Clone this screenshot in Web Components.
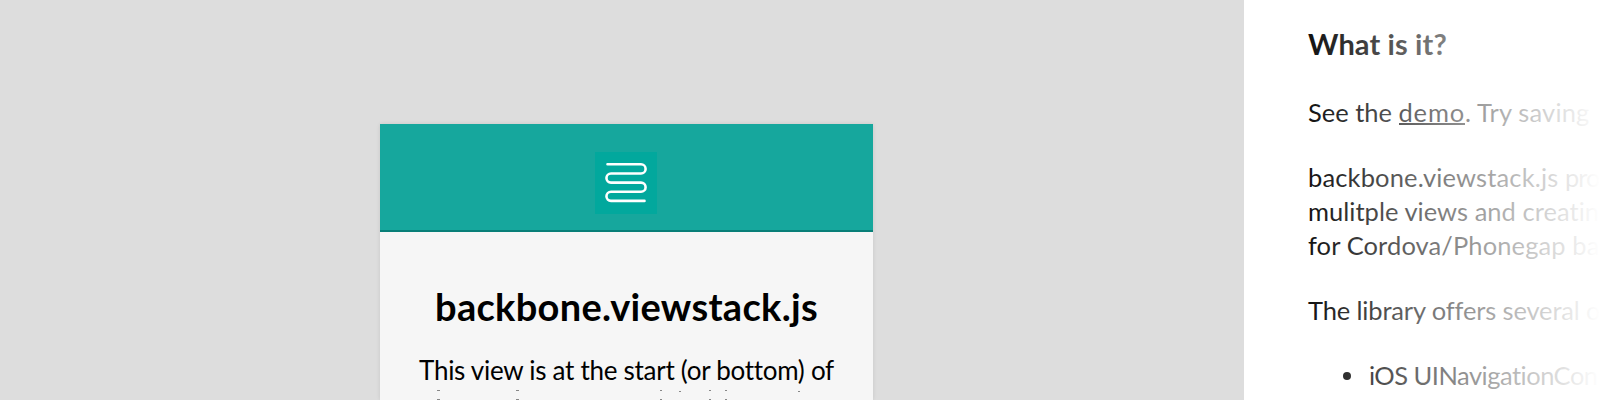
<!DOCTYPE html>
<html lang="en"><head><meta charset="utf-8"><title>backbone.viewstack.js</title>
<style>
html,body{margin:0;height:400px;overflow:hidden;background:#ddd}
body{font-family:Lato,"Open Sans",sans-serif;color:#111}
</style></head><body>
<demo-page>
  <view-card slot="stage">
    <fit-text slot="title" width="383">backbone.viewstack.js</fit-text>
    <fit-text slot="text" width="414">This view is at the start (or bottom) of</fit-text>
  </view-card>
  <doc-panel slot="docs"></doc-panel>
</demo-page>
<script>
const define=(name,html,setup)=>customElements.define(name,class extends HTMLElement{
  connectedCallback(){
    if(this.shadowRoot)return;
    this.attachShadow({mode:'open'}).innerHTML=html;
    if(setup)setup.call(this);
  }
});
define('stack-logo',`<style>:host{display:block;width:62px;height:62px;background:#02a89d}svg{display:block}</style>
<svg width="62" height="62" fill="none" stroke="#fff" stroke-width="2.6" stroke-linecap="round"><path d="M12.5 12.3H46a4.6 4.6 0 0 1 0 9.2H16a4.55 4.55 0 0 0 0 9.1H46a4.6 4.6 0 0 1 0 9.2H16a4.55 4.55 0 0 0 0 9.1H49.5"/></svg>`);
define('view-card',`<style>
:host{display:flex;flex-direction:column;width:493px;height:276px;background:#f6f6f6;box-shadow:0 0 4px rgba(0,0,0,.1)}
header{height:108px;padding:28px 1px 0 0;box-sizing:border-box;display:flex;justify-content:center;align-items:flex-start;background:#16a79d;border-bottom:2px solid #087f78}
.t{display:flex;justify-content:center;font-weight:700;font-size:38px;line-height:46px;margin-top:51px;color:#000}
.p{display:flex;justify-content:center;font-size:26px;line-height:34px;margin-top:24px;color:#000}
svg{display:block;margin-top:3px}
</style><header><stack-logo></stack-logo></header><div class="t"><slot name="title"></slot></div><div class="p"><slot name="text"></slot></div>
<svg width="493" height="10" stroke="#888" stroke-width="1"><path d="M57 .5h3M136 .5h3M280 .5h2M329 .5h2M345 .5h2M299 1.5h2M418 1.5h2M57 9.5h3M136 9.5h3M280 9.5h2M329 9.5h2M345 9.5h2"/></svg>`);
define('doc-panel',`<style>
:host{display:block;position:relative;box-sizing:border-box;width:356px;height:400px;overflow:hidden;background:#fff;padding:26px 0 0 64px;font-size:25.5px;line-height:34px;color:#111}
:host::after{content:"";position:absolute;inset:0;background:linear-gradient(90deg,rgba(255,255,255,0) 64px,#fff 356px)}
h2{margin:0 0 33px;font-size:29px;line-height:36px}
p{margin:0 0 31px}
.row{display:flex}
.row a{border-bottom:2px solid;height:28px;margin-bottom:4px}
.item{display:flex;align-items:center;gap:18px;padding-left:35px}
.item i{width:8px;height:8px;border-radius:50%;background:#111;margin-top:1px}
</style><h2><fit-text width="139">What is it?</fit-text></h2>
<p class="row"><fit-text width="90.5">See the </fit-text><a><fit-text width="66.5">demo</fit-text></a><fit-text width="124.5">. Try saving</fit-text></p>
<p><span class="row"><fit-text width="257">backbone.viewstack.js </fit-text><fit-text width="34.5">pro</fit-text></span><fit-text width="291.5">mulitple views and creatin</fit-text><fit-text width="291.5">for Cordova/Phonegap ba</fit-text></p>
<p><fit-text width="291.5">The library offers several o</fit-text></p>
<div class="item"><i></i><fit-text width="229">iOS UINavigationCon</fit-text></div>`);
define('demo-page',`<style>:host{display:flex;width:1600px;height:400px;overflow:hidden;background:#ddd}
main{width:1244px;box-sizing:border-box;padding:124px 0 0 380px}</style><main><slot name="stage"></slot></main><slot name="docs"></slot>`);
/* Tracks a line of text so that it fills the given measure; registered last, when every line is laid out. */
define('fit-text','<style>:host{display:block;white-space:pre;width:max-content}</style><slot></slot>',function(){
  const w=+this.getAttribute('width');
  const n=this.textContent.length;
  const r=document.createRange();r.selectNodeContents(this);
  const now=r.getBoundingClientRect().width;
  if(now)this.style.letterSpacing=((w-now)/n)+'px';
});
</script></body></html>
